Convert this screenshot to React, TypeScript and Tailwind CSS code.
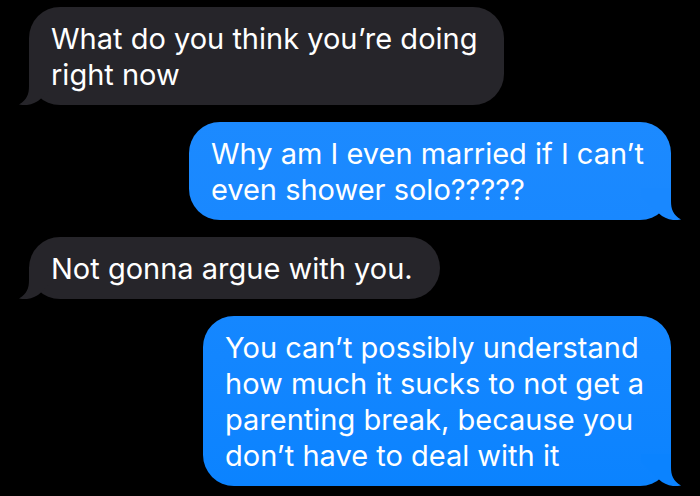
import React from 'react';
import clsx from 'clsx';

interface Message {
  id: number;
  sent: boolean;
  lines: string[];
  fill: string;
  tail: string;
}

const messages: Message[] = [
  {
    id: 1,
    sent: false,
    lines: ['What do you think you’re doing', 'right now'],
    fill: 'bg-[#26252a]',
    tail: 'text-[#26252a]',
  },
  {
    id: 2,
    sent: true,
    lines: ['Why am I even married if I can’t', 'even shower solo?????'],
    fill: 'bg-linear-to-b from-[#1c8aff] to-[#1988ff]',
    tail: 'text-[#1988ff]',
  },
  {
    id: 3,
    sent: false,
    lines: ['Not gonna argue with you.'],
    fill: 'bg-[#26252a]',
    tail: 'text-[#26252a]',
  },
  {
    id: 4,
    sent: true,
    lines: [
      'You can’t possibly understand',
      'how much it sucks to not get a',
      'parenting break, because you',
      'don’t have to deal with it',
    ],
    fill: 'bg-linear-to-b from-[#1587ff] to-[#0b83ff]',
    tail: 'text-[#0b83ff]',
  },
];

// Drawn for the left side, mirrored for sent messages
const Tail: React.FC<{ sent: boolean; className: string }> = ({ sent, className }) => (
  <svg
    viewBox="0 0 40 32"
    aria-hidden="true"
    className={clsx('absolute bottom-0 h-8 w-10', sent ? '-right-[10px] -scale-x-100' : '-left-[10px]', className)}
  >
    <path d="M10 0 V13 C10 21 8 27 0 31.5 C9 33.5 16.5 30.5 22 25.5 L40 8 V0 Z" fill="currentColor" />
  </svg>
);

const Bubble: React.FC<{ message: Message }> = ({ message }) => (
  <li
    className={clsx(
      'relative w-fit rounded-[31px] pt-[14px] pr-[27px] pb-3 pl-[22px]',
      message.sent ? 'self-end' : 'self-start',
      message.fill
    )}
  >
    <Tail sent={message.sent} className={message.tail} />
    <p className="relative text-[29px] leading-9 text-white">
      {message.lines.map((line) => (
        <span key={line} className="block">{line}</span>
      ))}
    </p>
  </li>
);

const App: React.FC = () => (
  <main className="min-h-screen bg-black pt-[7px] pr-[29px] pb-2 pl-[29px] font-['Inter','Liberation_Sans',sans-serif]">
    <ul className="flex flex-col gap-[17px]">
      {messages.map((message) => (
        <Bubble key={message.id} message={message} />
      ))}
    </ul>
  </main>
);

export default App;
